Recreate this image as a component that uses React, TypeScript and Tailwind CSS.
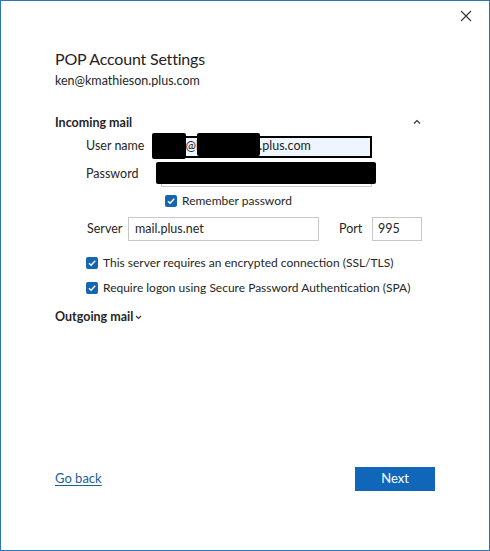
import React from 'react';

function Check({ className = '' }: { className?: string }) {
  return (
    <span className={`flex h-[12px] w-[12px] shrink-0 items-center justify-center rounded-[2px] bg-[#1565b0] ${className}`}>
      <svg width="10" height="10" viewBox="0 0 10 10" fill="none">
        <path d="M2 5.2 L4.1 7.2 L8.2 2.8" stroke="white" strokeWidth="1.4" />
      </svg>
    </span>
  );
}

function Redact({ className }: { className: string }) {
  return <div className={`absolute rounded-[2px] bg-black ${className}`}></div>;
}

export default function App() {
  return (
    <div className="flex h-[551px] w-[490px] flex-col border border-[#2a77b5] bg-white font-['Lato',sans-serif] text-[12.5px] text-[#262626]">
      {/* close */}
      <div className="flex h-[30px] items-center justify-end pr-[17px]">
        <svg width="12" height="12" viewBox="0 0 12 12" fill="none">
          <path d="M1 1 L11 11 M11 1 L1 11" stroke="#333" strokeWidth="1.1" />
        </svg>
      </div>

      <div className="flex flex-col px-[54px]">
        <div className="mt-[14px] flex h-[28px] items-center text-[16px] tracking-[-0.2px] text-[#242424]">POP Account Settings</div>
        <div className="flex h-[16px] items-center">ken@kmathieson.plus.com</div>

        <div className="mt-[24px] flex h-[20px] w-[366px] items-center justify-between">
          <span className="font-bold">Incoming mail</span>
          <svg width="8" height="6" viewBox="0 0 8 6" fill="none" className="-mt-[3px]">
            <path d="M1 4.5 L4 1.5 L7 4.5" stroke="#333" strokeWidth="1.2" />
          </svg>
        </div>

        {/* user name */}
        <div className="mt-[2px] flex h-[23px] items-center pl-[31px]">
          <span className="w-[75px]">User name</span>
          <div className="relative flex h-[22px] w-[211px] items-center whitespace-nowrap border-2 border-black bg-[#eef5fc] pl-[3px]">
            ken@kmathieson.plus.com
            <Redact className="-left-[11px] -top-[5px] h-[26px] w-[34px]" />
            <Redact className="left-[34px] -top-[5px] h-[23px] w-[63px]" />
          </div>
        </div>

        {/* password */}
        <div className="mt-[4px] flex h-[25px] items-center pl-[31px]">
          <span className="w-[75px]">Password</span>
          <div className="relative h-[25px] w-[211px] border border-[#c8c8c8] bg-white">
            <Redact className="-left-[6px] -top-[1px] h-[22px] w-[220px]" />
          </div>
        </div>

        {/* remember */}
        <div className="mt-[6px] flex h-[16px] items-center pl-[110px] text-[12px]">
          <Check className="mr-[5px]" />
          <span>Remember password</span>
        </div>

        {/* server */}
        <div className="mt-[8px] flex h-[24px] items-center pl-[32px]">
          <span className="w-[41px]">Server</span>
          <div className="flex h-[24px] w-[191px] items-center border border-[#c8c8c8] pl-[6px]">mail.plus.net</div>
          <span className="ml-[20px] w-[33px]">Port</span>
          <div className="flex h-[24px] w-[50px] items-center border border-[#c8c8c8] pl-[5px]">995</div>
        </div>

        <div className="mt-[14px] flex h-[16px] items-center whitespace-nowrap pl-[31px] text-[12px]">
          <Check className="mr-[5px]" />
          <span>This server requires an encrypted connection (SSL/TLS)</span>
        </div>
        <div className="mt-[9px] flex h-[16px] items-center whitespace-nowrap pl-[31px] text-[12px]">
          <Check className="mr-[5px]" />
          <span>Require logon using Secure Password Authentication (SPA)</span>
        </div>

        <div className="mt-[11px] flex h-[20px] items-center font-bold">
          Outgoing mail
          <svg width="7" height="5" viewBox="0 0 7 5" fill="none" className="ml-[2px]">
            <path d="M1 1 L3.5 3.5 L6 1" stroke="#333" strokeWidth="1.1" />
          </svg>
        </div>
      </div>

      <div className="mt-auto mb-[59px] flex items-center justify-between px-[54px]">
        <a className="text-[13px] text-[#1b5f96] underline underline-offset-2">Go back</a>
        <button className="h-[24px] w-[80px] bg-[#1066b9] text-[13px] text-white">Next</button>
      </div>
    </div>
  );
}
